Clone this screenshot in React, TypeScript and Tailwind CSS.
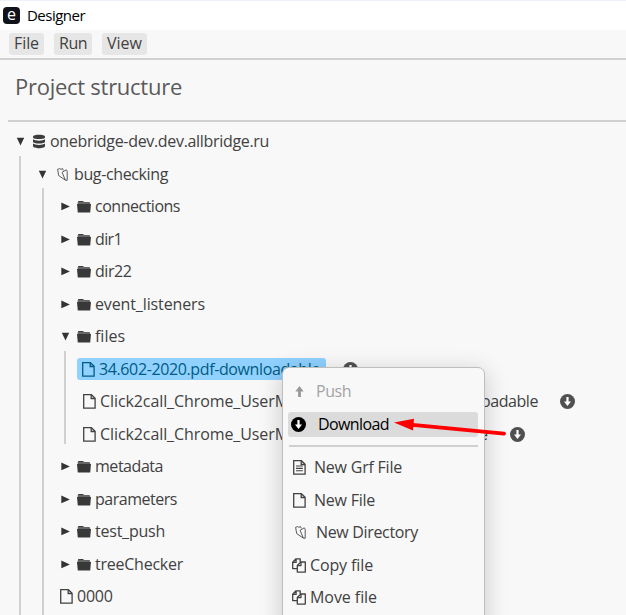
import { FC, ReactNode, useLayoutEffect, useRef, useState } from "react";
import clsx from "clsx";

interface LabelProps {
    text: string;
    width: number;
    className?: string;
}

// Text set to an exact advance width by spreading the difference over its letters
const Label: FC<LabelProps> = ({ text, width, className }) => {
    const ref = useRef<HTMLSpanElement>(null);
    const [spacing, setSpacing] = useState(0);

    useLayoutEffect(() => {
        if (!ref.current) return;
        const natural = ref.current.getBoundingClientRect().width - spacing * text.length;
        setSpacing((width - natural) / text.length);
    }, [text, width]);

    return (
        <span ref={ref} className={clsx("shrink-0 whitespace-pre", className)} style={{ letterSpacing: spacing }}>
            {text}
        </span>
    );
};

const Caret: FC<{ open?: boolean }> = ({ open }) => (
    <svg className="w-[9px] h-[9px] shrink-0" viewBox="0 0 9 9" fill="#333">
        {open ? <path d="M0.8 0.7H8.2L4.5 8.6Z" /> : <path d="M0.3 0.6L8.9 4.4L0.3 8.2Z" />}
    </svg>
);

const FolderIcon = () => (
    <svg className="w-[14px] h-[13px] shrink-0" viewBox="0 0 14 13">
        <path d="M0.7 4V2.2L1.6 1H6L6.8 2H12.6L13.4 4Z" fill="#666" />
        <path d="M1.4 1.2H6.1L6.6 1.9H1.2Z" fill="#333" />
        <path d="M0 4H14L13.2 12.4H0.8Z" fill="#383838" />
    </svg>
);

const OpenFolderIcon = () => (
    <svg className="w-[11px] h-[13px] shrink-0" viewBox="0 0 11 13" fill="none" stroke="#4a4a4a" strokeWidth="0.9" strokeLinejoin="round">
        <path d="M8.3 12.1L1.7 7.6L0.6 1.3L2.7 0.6L3.9 1.3L5.6 0.6L6.3 2.4" />
        <path d="M5.1 4.3L9.3 1.8L10.2 3.2V12.3L8.3 12.1Z" />
    </svg>
);

const FileIcon: FC<{ lines?: boolean }> = ({ lines }) => (
    <svg className="w-[13px] h-[15px] shrink-0" viewBox="0 0 13 15" fill="none" stroke="currentColor" strokeWidth="1.3">
        <path d="M0.7 0.7H8.4L12.1 4.3V14.1H0.7Z" />
        <path d="M8.2 0.9V4.5H12" />
        {lines && <path d="M3 6H9.8M3 8.4H9.8M3 10.8H9.8" strokeWidth="1.1" />}
    </svg>
);

const CopyIcon = () => (
    <svg className="w-[14px] h-[15px] shrink-0" viewBox="0 0 14 15" fill="none" stroke="currentColor" strokeWidth="1.3" strokeLinejoin="round">
        <path d="M5 10.6H0.7V4.2L4 0.8H8.2V4M0.8 4.4H4.1V0.9" />
        <path d="M8.9 4H13.3V14.1H5.3V7.5Z" />
        <path d="M9 4.1V7.6H5.4" />
    </svg>
);

const DatabaseIcon = () => (
    <svg className="w-[12px] h-[15px] shrink-0" viewBox="0 0 12 15" fill="#3c3c3c">
        <path d="M0 2.6C0 0 12 0 12 2.6V3.5C12 5.6 0 5.6 0 3.5Z" />
        <path d="M0 5.3C2 7.2 10 7.2 12 5.3V7.7C12 10.1 0 10.1 0 7.7Z" />
        <path d="M0 9.6C2 11.5 10 11.5 12 9.6V12C12 14.9 0 14.9 0 12Z" />
    </svg>
);

const DownloadIcon = () => (
    <svg className="w-[15px] h-[15px] shrink-0" viewBox="0 0 15 15">
        <circle cx="7.5" cy="7.5" r="7.5" fill="currentColor" />
        <path d="M6.4 3.1H8.6V7.6H11L7.5 12L4 7.6H6.4Z" fill="#fff" />
    </svg>
);

const PushIcon = () => (
    <svg className="w-[9px] h-[11px] shrink-0" viewBox="0 0 9 11" fill="#999">
        <path d="M4.5 0L8.7 5.4H5.9V11H3.1V5.4H0.3Z" />
    </svg>
);

const Row: FC<{ className?: string; children: ReactNode }> = ({ className, children }) => (
    <div className={clsx("flex items-center h-[32.5px]", className)}>{children}</div>
);

const Folder: FC<{ name: string; width: number; open?: boolean }> = ({ name, width, open }) => (
    <Row className="pl-[17px]">
        <Caret open={open} />
        <span className="flex ml-[7px] mr-[4px]">
            <FolderIcon />
        </span>
        <Label text={name} width={width} className="pb-px" />
    </Row>
);

const ContextMenu = () => (
    <div className="absolute left-[282px] top-[366.5px] w-[203px] h-[270px] rounded-[7px] border-[1.5px] border-[#bebebe] bg-[#f8f8f8] shadow-[0_5px_22px_2px_rgba(0,0,0,0.17)] pt-[7.5px] px-[5px]">
        <Row className="pl-[7px] text-[#a3a3a3]">
            <PushIcon />
            <Label text="Push" width={35} className="ml-[12px] pb-px" />
        </Row>
        <div className="flex items-center h-[25px] mt-[4px] mr-px rounded-[3px] bg-[#dbdbdb] pl-[3px] text-black">
            <DownloadIcon />
            <Label text="Download" width={71} className="ml-[12px]" />
        </div>
        <div className="h-[2px] mt-[8px] mb-[5px] mr-px ml-px bg-[#d0d0d0]" />
        <Row className="pl-[5px]">
            <FileIcon lines />
            <Label text="New Grf File" width={88} className="ml-[8px] pb-px" />
        </Row>
        <Row className="pl-[5px]">
            <FileIcon />
            <Label text="New File" width={61} className="ml-[8px] pb-px" />
        </Row>
        <Row className="pl-[7px]">
            <OpenFolderIcon />
            <Label text="New Directory" width={102} className="ml-[10px] pb-px" />
        </Row>
        <Row className="pl-[4px]">
            <CopyIcon />
            <Label text="Copy file" width={63} className="ml-[4px] pb-px" />
        </Row>
        <Row className="pl-[4px]">
            <CopyIcon />
            <Label text="Move file" width={67} className="ml-[4px] pb-px" />
        </Row>
    </div>
);

export default function App() {
    return (
        <div className="relative w-[626px] h-[615px] overflow-hidden bg-[#f8f8f8] text-[16px] leading-none text-[#414141] font-['Open_Sans','Noto_Sans',sans-serif]">
            <header className="flex items-center h-[30px] border-t border-[#edf2fb] bg-white pl-[3px] text-[15px] text-black">
                <div className="flex items-center justify-center w-[17px] h-[17px] rounded-[4px] bg-[#10131a] text-white text-[16px] pb-[3px]">
                    e
                </div>
                <Label text="Designer" width={58} className="ml-[7px]" />
            </header>

            <nav className="flex items-start gap-[10px] h-[30px] border-b-2 border-[#d0d0d0] pt-[3px] pl-[9px]">
                <div className="flex items-center h-[22px] w-[35px] pl-[5px] rounded-[3px] bg-[#e6e6e6]">
                    <Label text="File" width={25} className="pb-[2px]" />
                </div>
                <div className="flex items-center h-[22px] w-[38px] pl-[5px] rounded-[3px] bg-[#e6e6e6]">
                    <Label text="Run" width={28} className="pb-[2px]" />
                </div>
                <div className="flex items-center h-[22px] w-[45px] pl-[5px] rounded-[3px] bg-[#e6e6e6]">
                    <Label text="View" width={35} className="pb-[2px]" />
                </div>
            </nav>

            <div className="flex items-center h-[62px] ml-[8px] pl-[7px] pb-[8px] border-b-2 border-[#d0d0d0] text-[22px] text-[#5a5a5a]">
                <Label text="Project structure" width={167} />
            </div>

            <main className="pt-[3.25px]">
                <Row className="pl-[16px]">
                    <Caret open />
                    <span className="flex ml-[8px] mr-[5px]">
                        <DatabaseIcon />
                    </span>
                    <Label text="onebridge-dev.dev.allbridge.ru" width={219} className="pb-px" />
                </Row>
                <div className="ml-[19px] mt-[-2px] pt-[2px] border-l-2 border-[#d0d0d0]">
                    <Row className="pl-[17px]">
                        <Caret open />
                        <span className="flex ml-[10px] mr-[6px]">
                            <OpenFolderIcon />
                        </span>
                        <Label text="bug-checking" width={94} className="pb-px" />
                    </Row>
                    <div className="ml-[21px] mt-[-2px] pt-[2px] pb-4 border-l-2 border-[#d0d0d0]">
                        <Folder name="connections" width={85} />
                        <Folder name="dir1" width={27} />
                        <Folder name="dir22" width={36.5} />
                        <Folder name="event_listeners" width={110} />
                        <Folder name="files" width={30} open />
                        <div className="ml-[20px] mt-[-2px] pt-[2px] h-[93.5px] mb-[6px] border-l-2 border-[#d0d0d0]">
                            <Row className="pl-[11px]">
                                <div className="flex items-center h-[22px] w-[249px] rounded-[3px] bg-[#90d1ff] pl-[5px] text-[#005c82]">
                                    <FileIcon />
                                    <Label text="34.602-2020.pdf-downloadable" width={221} className="ml-[4px] pb-px" />
                                </div>
                                <span className="flex ml-[17px] text-[#505050]">
                                    <DownloadIcon />
                                </span>
                            </Row>
                            <Row className="pl-[17px]">
                                <FileIcon />
                                <Label text="Click2call_Chrome_UserM" width={189} className="ml-[4px] pb-px" />
                                <Label text="oadable" width={57} className="ml-[192px] pb-px" />
                                <span className="flex ml-[22px] text-[#505050]">
                                    <DownloadIcon />
                                </span>
                            </Row>
                            <Row className="pl-[17px]">
                                <FileIcon />
                                <Label text="Click2call_Chrome_UserM" width={189} className="ml-[4px] pb-px" />
                                <Label text="le" width={13} className="ml-[186px] pb-px" />
                                <span className="flex ml-[22px] text-[#505050]">
                                    <DownloadIcon />
                                </span>
                            </Row>
                        </div>
                        <Folder name="metadata" width={68} />
                        <Folder name="parameters" width={82} />
                        <Folder name="test_push" width={70} />
                        <Folder name="treeChecker" width={88} />
                        <Row className="pl-[16px]">
                            <FileIcon />
                            <Label text="0000" width={35.5} className="ml-[4px] pb-px" />
                        </Row>
                    </div>
                </div>
            </main>

            <ContextMenu />

            <svg className="absolute left-[390px] top-[415px] w-[120px] h-[24px]" viewBox="390 415 120 24">
                <path d="M410 424.6L504 433.6" stroke="#f00" strokeWidth="3.8" strokeLinecap="round" />
                <path d="M394 422.4L414 418.7L413 430.4Z" fill="#f00" />
            </svg>
        </div>
    );
}
